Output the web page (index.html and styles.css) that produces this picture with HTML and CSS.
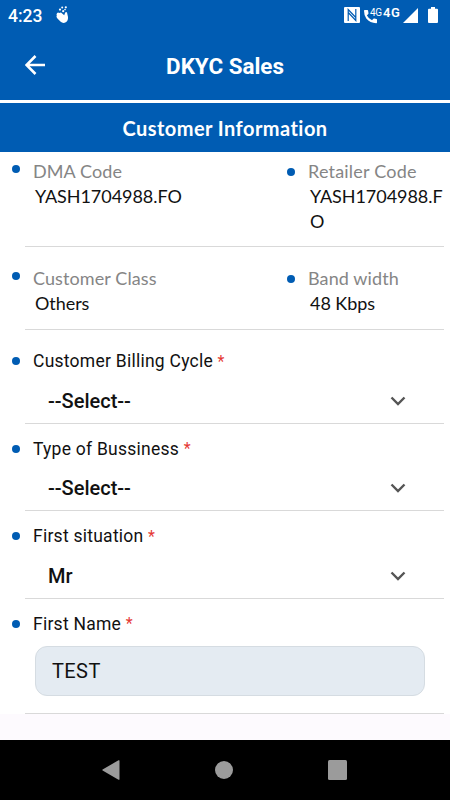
FILE: index.html
```html
<!DOCTYPE html>
<html lang="en">
<head>
  <meta charset="UTF-8" />
  <meta name="viewport" content="width=device-width, initial-scale=1.0"/>
  <title>DKYC Sales</title>
  <link rel="stylesheet" href="styles.css">
</head>
<body>
  <div class="status">
    <span class="time">4:23</span>
    <svg class="clap" width="14" height="18" viewBox="0 0 14 18" fill="#fff">
      <path d="M1 7.2Q2 6 3.2 7L5 6.4L8.2 9.3L9.2 6.4Q10.2 5.4 11 6.4L12 11Q12.4 15.8 8.6 16.8Q6.2 17.2 4.4 15.6L1 12Q0 10.6 .8 9.6Q.1 8.4 1 7.2Z"/>
      <circle cx="4" cy="3.6" r="1.1"/>
      <circle cx="6.2" cy="1.6" r="1"/>
      <circle cx="7.2" cy="5.2" r="1.1"/>
      <circle cx="9.8" cy="1.3" r="1.1"/>
      <circle cx="9" cy="3.6" r=".8"/>
    </svg>
    <svg class="nfc" width="16" height="16" viewBox="0 0 16 16">
      <rect width="16" height="16" rx="1" fill="#fff"/>
      <path d="M4.2 14V2.5L11.8 10.5M11.8 2V13.5L4.2 5.5" fill="none" stroke="#005cb3" stroke-width="1.2"/>
    </svg>
    <svg class="call" width="13" height="14" viewBox="0 0 13 14" fill="#fff">
      <path d="M.7 0H3.4Q4 0 4.1.7L4.5 3.2Q4.6 3.7 4.2 4.1L2.9 5.4Q4.8 8.8 8 10.2L9.4 8.8Q9.7 8.5 10.2 8.6L12.5 9Q13 9.1 13 9.7V12.4Q13 13.2 12.3 13.2Q6 13 2.3 8.5Q0 5.3 0 .8Q0 0 .7 0Z"/>
    </svg>
    <span class="net-small">4G</span>
    <span class="net">4G</span>
    <svg class="signal" width="15" height="15" viewBox="0 0 15 15" fill="#fff"><path d="M15 0V15H0Z"/></svg>
    <svg class="battery" width="10" height="16" viewBox="0 0 10 16" fill="#fff"><path d="M3 0H7V1.7H9Q10 1.7 10 2.7V15Q10 16 9 16H1Q0 16 0 15V2.7Q0 1.7 1 1.7H3Z"/></svg>
  </div>

  <div class="header">
    <svg width="20" height="20" viewBox="0 0 20 20" fill="none" stroke="#fff" stroke-width="2.6"><path d="M20 10H2M10.5 1L1.5 10L10.5 19"/></svg>
    <h1>DKYC Sales</h1>
  </div>

  <h2 class="banner">Customer Information</h2>

  <div class="form">
    <div class="row info codes">
      <div class="item">
        <div class="label">DMA Code</div>
        <div class="value">YASH1704988.FO</div>
      </div>
      <div class="item right">
        <div class="label wide">Retailer Code</div>
        <div class="value">YASH1704988.F<wbr>O</div>
      </div>
    </div>

    <div class="row info plan">
      <div class="item">
        <div class="label">Customer Class</div>
        <div class="value">Others</div>
      </div>
      <div class="item right">
        <div class="label">Band width</div>
        <div class="value">48 Kbps</div>
      </div>
    </div>

    <div class="row field first">
      <label>Customer Billing Cycle <span class="required">*</span></label>
      <div class="select">
        <span>--Select--</span>
        <svg width="16" height="10" viewBox="0 0 16 10"><path d="M1.5 1.5L8 8L14.5 1.5"/></svg>
      </div>
    </div>

    <div class="row field">
      <label>Type of Bussiness <span class="required">*</span></label>
      <div class="select">
        <span>--Select--</span>
        <svg width="16" height="10" viewBox="0 0 16 10"><path d="M1.5 1.5L8 8L14.5 1.5"/></svg>
      </div>
    </div>

    <div class="row field">
      <label>First situation <span class="required">*</span></label>
      <div class="select">
        <span>Mr</span>
        <svg width="16" height="10" viewBox="0 0 16 10"><path d="M1.5 1.5L8 8L14.5 1.5"/></svg>
      </div>
    </div>

    <div class="row field name">
      <label for="firstName">First Name <span class="required">*</span></label>
      <input type="text" id="firstName" value="TEST" />
    </div>
  </div>

  <div class="navbar">
    <svg width="18" height="20" viewBox="0 0 18 20"><path d="M17.5 .5V19.5Q17 20 16.5 19.7L.6 10.6Q0 10 .6 9.4L16.5 .3Q17 0 17.5 .5Z"/></svg>
    <svg width="18" height="18" viewBox="0 0 18 18"><circle cx="9" cy="9" r="9"/></svg>
    <svg width="19" height="20" viewBox="0 0 19 20"><rect width="19" height="20" rx="1.5"/></svg>
  </div>
</body>
</html>
```

FILE: styles.css
```css
* {
  box-sizing: border-box;
}
body {
  margin: 0;
  height: 800px;
  display: flex;
  flex-direction: column;
  overflow: hidden;
  font-family: Roboto, sans-serif;
  background: #fdfafe;
  color: #111;
}
.status {
  height: 32px;
  padding: 0 12px 0 8px;
  display: flex;
  align-items: center;
  background: #005cb3;
  color: #fff;
}
.time {
  width: 48px;
  font-size: 17.5px;
  font-weight: 500;
  line-height: 32px;
}
.clap {
  margin-top: -3px;
}
.nfc {
  margin: -2px 0 0 auto;
}
.call {
  margin: 2px -7px 0 4px;
}
.net-small {
  width: 12px;
  margin: -8px 1px 0 0;
  font-size: 10px;
  letter-spacing: -0.4px;
}
.net {
  width: 19px;
  margin-top: -8px;
  font-size: 13px;
  font-weight: 600;
  letter-spacing: 0.6px;
}
.signal {
  margin: -1px 0 0 1px;
}
.battery {
  margin: -2px 0 0 10px;
}
.header {
  height: 68px;
  padding: 0 25px 2px;
  display: grid;
  grid-template-columns: 20px 1fr 20px;
  align-items: center;
  background: #005cb3;
  color: #fff;
}
h1 {
  margin: 0;
  padding-top: 2px;
  font-size: 22.4px;
  font-weight: 700;
  line-height: 30px;
  text-align: center;
}
.banner {
  height: 52px;
  margin: 0;
  border-top: 3px solid #fff;
  background: #005cb3;
  color: #fff;
  font-family: Lato, sans-serif;
  font-size: 20px;
  font-weight: 700;
  line-height: 51px;
  letter-spacing: 0.45px;
  text-align: center;
}
.form {
  padding: 0 6px 0 25px;
  background: #fff;
}
.row {
  border-bottom: 1px solid #d9d9d9;
}
.info {
  display: grid;
  grid-template-columns: 275px 1fr;
  font-family: Lato, sans-serif;
  font-size: 18px;
  line-height: 25px;
}
.codes {
  height: 95px;
  padding-top: 7px;
}
.plan {
  height: 83px;
  padding-top: 19px;
}
.item {
  padding-left: 8px;
}
.label, label {
  display: flex;
  align-items: center;
}
.label::before, label::before {
  content: "";
  flex: none;
  width: 8px;
  height: 8px;
  margin: 0 13px 0 -21px;
  border-radius: 50%;
  background: #005cb3;
}
.label {
  color: #858585;
  letter-spacing: 0.1px;
}
.wide {
  letter-spacing: 0.2px;
}
.label::before {
  margin-bottom: 5px;
}
.right .label::before {
  margin-bottom: 0;
}
.value {
  padding-left: 2px;
  letter-spacing: -0.05px;
}
.field {
  height: 87.6px;
  padding: 12px 0 0 8px;
}
.first {
  height: 93.5px;
  padding-top: 18px;
}
label {
  height: 26px;
  font-size: 17.5px;
  letter-spacing: 0.25px;
  white-space: pre;
}
.required {
  color: #e53935;
  font-size: 16px;
}
.select {
  height: 51px;
  padding: 2px 38px 0 15px;
  display: flex;
  align-items: center;
  justify-content: space-between;
  font-size: 20px;
  font-weight: 500;
}
.select path {
  fill: none;
  stroke: #555;
  stroke-width: 2.4;
}
.name {
  height: 115px;
}
input {
  width: 390px;
  height: 50px;
  margin: 9px 0 0 2px;
  padding: 1px 16px 0;
  border: 1px solid #d5dce2;
  border-radius: 12px;
  background: #e4ebf2;
  color: #111;
  font-family: Roboto, sans-serif;
  font-size: 20px;
  letter-spacing: 0.4px;
}
.navbar {
  height: 60px;
  margin-top: auto;
  padding: 0 103px 0 102px;
  display: flex;
  align-items: center;
  justify-content: space-between;
  background: #000;
}
.navbar svg {
  fill: #9b9b9b;
}
```
